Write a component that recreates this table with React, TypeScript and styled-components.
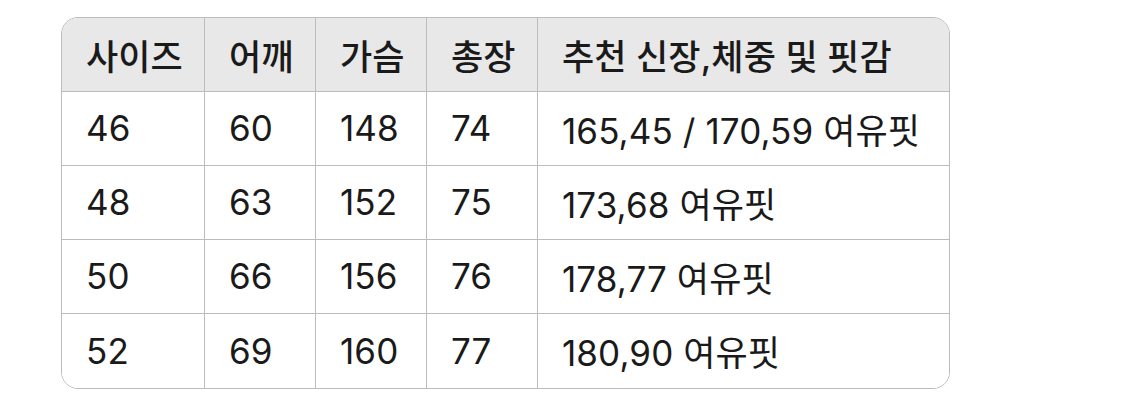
import styled, { createGlobalStyle } from "styled-components";

const GlobalStyle = createGlobalStyle`
  html, body {
    margin: 0;
    padding: 0;
    background: #ffffff;
  }
  body {
    font-family: "Inter", "Noto Sans CJK KR", sans-serif;
    color: #1a1a1a;
  }
`;

const Page = styled.div`
  width: 1125px;
  height: 416px;
  padding: 17px 0 0 61px;
  box-sizing: border-box;
`;

const Table = styled.div`
  width: 889px;
  height: 372px;
  box-sizing: border-box;
  display: grid;
  grid-template-columns: 143px 111px 111px 111px 1fr;
  grid-template-rows: repeat(5, 1fr);
  border: 1.5px solid #bcbcbc;
  border-radius: 17px;
  overflow: hidden;
`;

const Cell = styled.div<{ $head?: boolean; $lastCol?: boolean; $lastRow?: boolean }>`
  display: flex;
  align-items: center;
  padding: 0 0 1px 24px;
  box-sizing: border-box;
  background: ${(p) => (p.$head ? "#e8e8e8" : "#ffffff")};
  border-right: ${(p) => (p.$lastCol ? "none" : "1.5px solid #bcbcbc")};
  border-bottom: ${(p) => (p.$lastRow ? "none" : "1.5px solid #bcbcbc")};
  font-size: 35px;
  font-weight: ${(p) => (p.$head ? 500 : 400)};
  letter-spacing: 0.1px;
  white-space: nowrap;
`;

const head = ["사이즈", "어깨", "가슴", "총장", "추천 신장,체중 및 핏감"];

const rows = [
  ["46", "60", "148", "74", "165,45 / 170,59 여유핏"],
  ["48", "63", "152", "75", "173,68 여유핏"],
  ["50", "66", "156", "76", "178,77 여유핏"],
  ["52", "69", "160", "77", "180,90 여유핏"],
];

function App() {
  return (
    <>
      <GlobalStyle />
      <Page>
        <Table>
          {head.map((h, i) => (
            <Cell key={h} $head $lastCol={i === head.length - 1}>
              {h}
            </Cell>
          ))}
          {rows.map((r, ri) =>
            r.map((v, ci) => (
              <Cell
                key={`${ri}-${ci}`}
                $lastCol={ci === r.length - 1}
                $lastRow={ri === rows.length - 1}
              >
                {v}
              </Cell>
            ))
          )}
        </Table>
      </Page>
    </>
  );
}

export default App;
